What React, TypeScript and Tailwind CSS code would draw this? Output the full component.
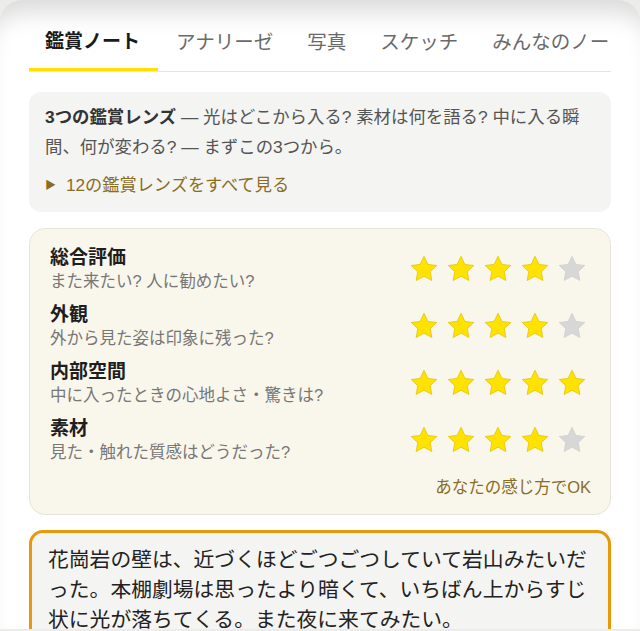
import React from "react";

const tabs = ["鑑賞ノート", "アナリーゼ", "写真", "スケッチ", "みんなのノート"];

const ratings = [
  { title: "総合評価", hint: "また来たい? 人に勧めたい?", value: 4 },
  { title: "外観", hint: "外から見た姿は印象に残った?", value: 4 },
  { title: "内部空間", hint: "中に入ったときの心地よさ・驚きは?", value: 5 },
  { title: "素材", hint: "見た・触れた質感はどうだった?", value: 4 },
];

function Star({ filled }: { filled: boolean }) {
  return (
    <svg viewBox="0 0 24 24" className="h-[30px] w-[30px] shrink-0">
      <polygon
        points="12,1.8 15.1,8.3 22.2,9.2 17,14.1 18.3,21.2 12,17.8 5.7,21.2 7,14.1 1.8,9.2 8.9,8.3"
        fill={filled ? "#ffe200" : "#d7d7d7"}
        stroke={filled ? "#e2c300" : "#cdcdcd"}
        strokeWidth="0.6"
        strokeLinejoin="round"
      />
    </svg>
  );
}

export default function App() {
  return (
    <div
      className="h-[631px] w-[640px] overflow-hidden bg-[#ececea]"
      style={{ fontFamily: '"Liberation Sans", "Noto Sans CJK JP", sans-serif' }}
    >
      <div className="h-[629px] overflow-hidden rounded-t-[22px] bg-white px-[29px] pt-[16px] shadow-[inset_0_26px_24px_-14px_rgba(0,0,0,0.15)]">
        {/* tab bar */}
        <div className="flex overflow-hidden border-b border-[#e4e4e4]">
          {tabs.map((t, i) => (
            <div
              key={t}
              className={`shrink-0 whitespace-nowrap border-b-[3px] pb-[13px] pt-[13px] leading-[26px] ${
                i === 0
                  ? "border-[#ffe000] pl-4 pr-[18px] text-[19px] font-bold text-[#1a1a1a]"
                  : "border-transparent px-[17px] text-[19.5px] text-[#6a6a6a]"
              } ${i === 1 ? "pl-[18px]" : ""}`}
            >
              {t}
            </div>
          ))}
        </div>

        {/* lens box */}
        <div className="mt-5 rounded-[12px] bg-[#f4f4f2] px-4 pb-[13px] pt-[10px]">
          <p className="text-[17.4px] leading-[30px] text-[#555]">
            <span className="font-bold text-[#333]">3つの鑑賞レンズ</span> — 光はどこから入る? 素材は何を語る? 中に入る瞬間、何が変わる? — まずこの3つから。
          </p>
          <div className="mt-[10px] flex items-center gap-[10px] text-[17.2px] leading-[27px] text-[#8a6d1f]">
            <span className="text-[11px]">▶</span>
            <span>12の鑑賞レンズをすべて見る</span>
          </div>
        </div>

        {/* ratings */}
        <div className="mt-4 rounded-[16px] border border-[#e8e4d8] bg-[#f9f6ec] pb-[16px] pl-5 pr-[23px] pt-[17px]">
          <div className="flex flex-col gap-[11px]">
            {ratings.map((r) => (
              <div key={r.title} className="flex items-center justify-between">
                <div>
                  <div className="text-[19px] font-bold leading-[24px] text-[#1e1e1e]">{r.title}</div>
                  <div className="text-[16.5px] leading-[22px] text-[#777]">{r.hint}</div>
                </div>
                <div className="flex gap-[7px]">
                  {[1, 2, 3, 4, 5].map((n) => (
                    <Star key={n} filled={n <= r.value} />
                  ))}
                </div>
              </div>
            ))}
          </div>
          <div className="-mr-[4px] mt-[13px] text-right text-[16.5px] leading-[22px] text-[#8a6d1f]">
            あなたの感じ方でOK
          </div>
        </div>

        {/* note */}
        <div className="mt-[15px] rounded-[14px] border-[3px] border-[#e8990a] bg-[#f4f4f2] pb-4 pl-4 pr-[15px] pt-[12px] text-[20.8px] leading-[30px] text-[#222]">
          花崗岩の壁は、近づくほどごつごつしていて岩山みたいだった。本棚劇場は思ったより暗くて、いちばん上からすじ状に光が落ちてくる。また夜に来てみたい。
        </div>
      </div>
    </div>
  );
}
